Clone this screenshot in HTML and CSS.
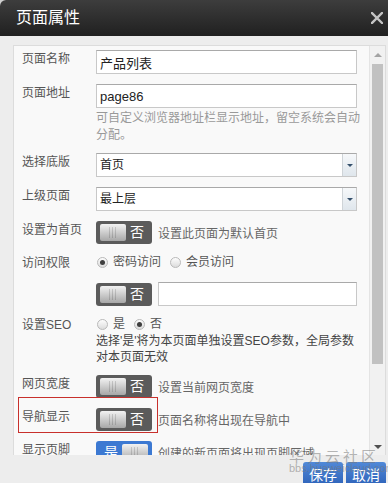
FILE: index.html
```html
<!DOCTYPE html>
<html lang="zh-CN">
<head>
  <meta charset="UTF-8">
  <meta name="viewport" content="width=device-width, initial-scale=1.0">
  <title>页面属性</title>
  <link rel="stylesheet" href="styles.css">
</head>
<body>
  <div class="dialog">
    <div class="dialog-title">
      <h1>页面属性</h1>
      <span class="close">
        <svg width="12" height="12" viewBox="0 0 12 12"><path d="M1 1L11 11M11 1L1 11" stroke="#c4c4c4" stroke-width="2.4" stroke-linecap="square"/></svg>
      </span>
    </div>

    <div class="dialog-body">
      <div class="panel">
        <div class="form">
          <div class="row">
            <label>页面名称</label>
            <div class="field"><input class="text" type="text" value="产品列表"></div>
          </div>

          <div class="row">
            <label>页面地址</label>
            <div class="field">
              <input class="text" type="text" value="page86">
              <p class="help">可自定义浏览器地址栏显示地址，留空系统会自动<br>分配。</p>
            </div>
          </div>

          <div class="row">
            <label>选择底版</label>
            <div class="field">
              <div class="select"><span class="select-value">首页</span><span class="select-arrow"></span></div>
            </div>
          </div>

          <div class="row">
            <label>上级页面</label>
            <div class="field">
              <div class="select"><span class="select-value">最上层</span><span class="select-arrow"></span></div>
            </div>
          </div>

          <div class="row">
            <label>设置为首页</label>
            <div class="field line">
              <span class="switch"><span class="knob"></span><span class="switch-text">否</span></span>
              <span class="note">设置此页面为默认首页</span>
            </div>
          </div>

          <div class="row row-radio">
            <label>访问权限</label>
            <div class="field line">
              <span class="radio-item"><span class="radio checked"></span>密码访问</span>
              <span class="radio-item"><span class="radio"></span>会员访问</span>
            </div>
          </div>

          <div class="row">
            <label></label>
            <div class="field line">
              <span class="switch"><span class="knob"></span><span class="switch-text">否</span></span>
              <input class="text" type="text" value="">
            </div>
          </div>

          <div class="row row-radio">
            <label>设置SEO</label>
            <div class="field">
              <div class="line">
                <span class="radio-item"><span class="radio"></span>是</span>
                <span class="radio-item"><span class="radio checked"></span>否</span>
              </div>
              <p class="help help-dark">选择&#39;是&#39;将为本页面单独设置SEO参数，全局参数<br>对本页面无效</p>
            </div>
          </div>

          <div class="row">
            <label>网页宽度</label>
            <div class="field line">
              <span class="switch"><span class="knob"></span><span class="switch-text">否</span></span>
              <span class="note">设置当前网页宽度</span>
            </div>
          </div>

          <div class="row marked">
            <span class="mark"></span>
            <label>导航显示</label>
            <div class="field line">
              <span class="switch"><span class="knob"></span><span class="switch-text">否</span></span>
              <span class="note">页面名称将出现在导航中</span>
            </div>
          </div>

          <div class="row">
            <label>显示页脚</label>
            <div class="field line">
              <span class="switch on"><span class="knob"></span><span class="switch-text">是</span></span>
              <span class="note">创建的新页面将出现页脚区域</span>
            </div>
          </div>
        </div>

        <!-- scrollbar of the form panel -->
        <div class="scrollbar">
          <span class="arrow-up"></span>
          <span class="thumb"></span>
          <span class="arrow-down"></span>
        </div>
      </div>
    </div>

    <div class="dialog-foot">
      <button class="btn">保存</button>
      <button class="btn">取消</button>
    </div>

    <div class="watermark">
      <span class="wm-name">华为云社区</span>
      <span class="wm-url">bbs.huaweicloud.com</span>
    </div>
  </div>
</body>
</html>
```

FILE: styles.css
```css
/* General styles */
html, body {
  margin: 0;
  padding: 0;
  height: 100%;
  overflow: hidden;
}

body {
  background: #cfcfcf;
  font-family: "Liberation Sans", "Noto Sans CJK SC", sans-serif;
  font-size: 12px;
  color: #555;
}

.dialog {
  position: relative;
  width: 388px;
  height: 483px;
  display: flex;
  flex-direction: column;
  background: #ededed;
  border-radius: 6px 0 0 0;
  overflow: hidden;
}

/* Title bar */
.dialog-title {
  flex: none;
  height: 36px;
  display: flex;
  align-items: center;
  justify-content: space-between;
  padding: 0 5px 0 16px;
  background: linear-gradient(#3d3d3d, #202020);
}

.dialog-title h1 {
  margin: 0;
  font-size: 16px;
  font-weight: normal;
  line-height: 20px;
  color: #fff;
}

.close {
  display: flex;
  width: 12px;
  height: 12px;
}

/* Body with scrolling panel */
.dialog-body {
  flex: 1;
  min-height: 0;
  display: flex;
  padding: 9px 2px 0 13px;
}

.panel {
  flex: 1;
  display: flex;
  background: #f9f9f9;
  border: 1px solid #dcdcdc;
  border-bottom: 0;
  overflow: hidden;
}

.form {
  flex: 1;
  padding: 4px 12px 0 8px;
}

.row {
  display: grid;
  grid-template-columns: 74px 1fr;
  margin-bottom: 10px;
}

.row label {
  line-height: 18px;
  color: #555;
  white-space: nowrap;
}

.line {
  display: flex;
  align-items: center;
  gap: 6px;
}

.text {
  display: block;
  width: 100%;
  height: 24px;
  box-sizing: border-box;
  margin: 0;
  padding: 0 3px;
  border: 1px solid #c8c8c8;
  border-top-color: #a9a9a9;
  background: #fff;
  font: 13px "Liberation Sans", "Noto Sans CJK SC", sans-serif;
  color: #222;
  outline: none;
}

.line .text {
  flex: 1;
  width: auto;
  min-width: 0;
}

.help {
  margin: 2px -6px -1px 0;
  line-height: 17px;
  color: #999;
  white-space: nowrap;
}

.help-dark {
  margin: 0;
  line-height: 16px;
  color: #444;
}

/* Fake select */
.select {
  display: flex;
  height: 24px;
  box-sizing: border-box;
  border: 1px solid #c8c8c8;
  border-top-color: #a9a9a9;
  background: #fff;
}

.select-value {
  flex: 1;
  padding-left: 3px;
  line-height: 22px;
  color: #222;
}

.select-arrow {
  width: 13px;
  border-left: 1px solid #cfd4d8;
  background: linear-gradient(#f6f8fa, #dfe6ec);
  display: flex;
  align-items: center;
  justify-content: center;
}

.select-arrow::after {
  content: "";
  border-left: 3px solid transparent;
  border-right: 3px solid transparent;
  border-top: 3px solid #35506c;
}

/* Switch */
.switch {
  flex: none;
  display: inline-flex;
  align-items: center;
  width: 56px;
  height: 23px;
  box-sizing: border-box;
  padding: 3px 4px;
  border-radius: 3px;
  background: #5b5b5b;
}

.switch.on {
  flex-direction: row-reverse;
  background: #3c79d2;
}

.knob {
  position: relative;
  width: 26px;
  height: 17px;
  border-radius: 2px;
  background: linear-gradient(#f2f2f2, #a7a7a7);
}

.knob::after {
  content: "";
  position: absolute;
  left: 9px;
  top: 3px;
  width: 9px;
  height: 11px;
  background: repeating-linear-gradient(90deg, rgba(0, 0, 0, 0.14) 0 1px, transparent 1px 3px);
}

.switch-text {
  flex: 1;
  text-align: center;
  font-size: 14px;
  line-height: 17px;
  color: #fff;
}

.note {
  color: #666;
  white-space: nowrap;
}

/* Radios */
.row-radio .line {
  height: 17px;
  gap: 0;
}

.radio-item {
  display: inline-flex;
  align-items: center;
  gap: 5px;
  margin-right: 8px;
  margin-left: 1px;
  line-height: 17px;
  color: #555;
}

.radio {
  position: relative;
  width: 11px;
  height: 11px;
  box-sizing: border-box;
  border: 1px solid #b9b9b9;
  border-radius: 50%;
  background: linear-gradient(#fdfdfd, #dcdcdc);
}

.radio.checked::after {
  content: "";
  position: absolute;
  left: 2px;
  top: 2px;
  width: 5px;
  height: 5px;
  border-radius: 50%;
  background: #3f3f3f;
}

/* Annotation box */
.marked {
  position: relative;
}

.mark {
  position: absolute;
  left: -4px;
  top: -11px;
  width: 140px;
  height: 36px;
  box-sizing: border-box;
  border: 1px solid #c8302c;
}

/* Scrollbar */
.scrollbar {
  flex: none;
  width: 16px;
  box-sizing: border-box;
  display: flex;
  flex-direction: column;
  align-items: center;
  background: #f1f1f1;
  border-left: 1px solid #e4e4e4;
}

.arrow-up,
.arrow-down {
  height: 17px;
  display: flex;
  align-items: center;
}

.arrow-up::after {
  content: "";
  border-left: 4px solid transparent;
  border-right: 4px solid transparent;
  border-bottom: 4px solid #a3a3a3;
}

.arrow-down {
  margin-top: auto;
}

.arrow-down::after {
  content: "";
  border-left: 4px solid transparent;
  border-right: 4px solid transparent;
  border-top: 4px solid #505050;
}

.thumb {
  width: 11px;
  height: 300px;
  margin: 1px 1px 0 0;
  background: #c1c1c1;
}

/* Footer buttons */
.dialog-foot {
  flex: none;
  height: 28px;
  box-sizing: border-box;
  display: flex;
  justify-content: flex-end;
  gap: 3px;
  padding: 7px 2px 0 0;
}

.btn {
  width: 40px;
  height: 26px;
  padding: 0;
  border: 0;
  border-radius: 3px 3px 0 0;
  background: linear-gradient(#5089d8, #2b5fb6);
  font: 14px "Liberation Sans", "Noto Sans CJK SC", sans-serif;
  line-height: 24px;
  color: #fff;
}

/* Watermark */
.watermark {
  position: absolute;
  left: 289px;
  top: 448px;
  display: flex;
  flex-direction: column;
  color: rgba(120, 120, 120, 0.55);
  pointer-events: none;
}

.wm-name {
  font-size: 15px;
  line-height: 18px;
  letter-spacing: 3px;
}

.wm-url {
  font-size: 11px;
  line-height: 12px;
  margin-top: -4px;
}
```
